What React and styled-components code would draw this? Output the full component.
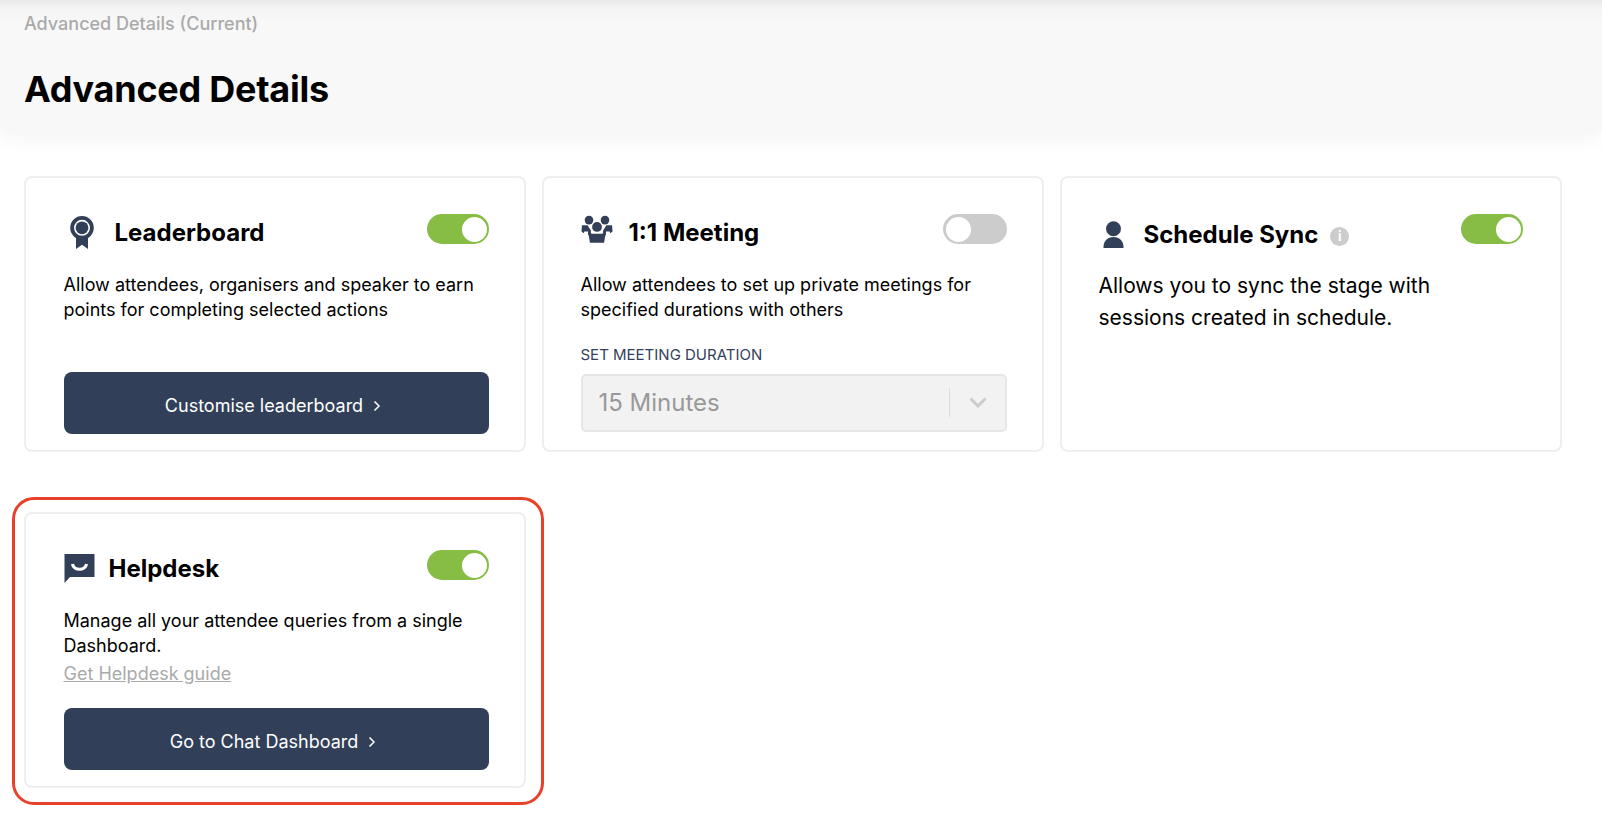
import React from "react";
import styled, { createGlobalStyle } from "styled-components";

const Global = createGlobalStyle`
  html, body { margin: 0; padding: 0; background: #fff; }
  body { font-family: Inter, "Noto Sans", sans-serif; color: #000; -webkit-font-smoothing: antialiased; }
  * { box-sizing: border-box; }
`;

const Page = styled.div`
  width: 1602px;
  height: 832px;
  overflow: hidden;
`;
const Header = styled.header`
  height: 130px;
  padding: 14px 24px 0;
  background: linear-gradient(#e9e9e9 0, #f4f4f4 9px, #f8f8f8 24px);
  box-shadow: 0 10px 18px rgba(0, 0, 0, 0.04);
`;
const Crumb = styled.div`
  font-size: 18px;
  line-height: 20px;
  font-weight: 500;
  color: #aaaaaa;
`;
const PageTitle = styled.h1`
  margin: 33px 0 0;
  font-size: 36px;
  line-height: 44px;
  font-weight: 650;
  letter-spacing: -0.25px;
  color: #000;
`;
const Grid = styled.main`
  display: grid;
  grid-template-columns: repeat(3, 501.5px);
  grid-auto-rows: 276px;
  column-gap: 16.5px;
  row-gap: 60px;
  padding: 46px 0 0 24px;
`;
const Card = styled.section`
  position: relative;
  display: flex;
  flex-direction: column;
  padding: 36px 37.5px 16px ${(p) => p.$left || 37.5}px;
  background: #fff;
  border: 2px solid #eeeeee;
  border-radius: 8px;
  ${(p) =>
    p.$highlight &&
    `&::after {
      content: "";
      position: absolute;
      left: -14px; right: -20.5px; top: -17px; bottom: -19px;
      border: 3.5px solid #e8412a;
      border-radius: 22px;
      pointer-events: none;
    }`}
`;
const CardHead = styled.div`
  display: flex;
  justify-content: space-between;
  align-items: flex-start;
  height: 30px;
`;
const TitleGroup = styled.div`
  display: flex;
  align-items: center;
  height: 34px;
  margin-top: ${(p) => p.$drop || 1.5}px;
`;
const IconBox = styled.span`
  display: flex;
  width: ${(p) => p.$w}px;
  height: 34px;
  padding-left: ${(p) => p.$inset || 0}px;
  padding-bottom: ${(p) => p.$lift || 0}px;
  align-items: center;
`;
const CardTitle = styled.h2`
  margin: 0;
  font-size: 24px;
  line-height: 30px;
  font-weight: 650;
  color: #000;
`;
const InfoDot = styled.span`
  display: flex;
  align-items: center;
  justify-content: center;
  width: 19px;
  height: 19px;
  margin: 3px 0 0 12px;
  border-radius: 50%;
  background: #cccccc;
  color: #fff;
  font-size: 13px;
  font-weight: 700;
`;
const Toggle = styled.span`
  position: relative;
  flex: none;
  width: ${(p) => p.$w || 62}px;
  height: 30px;
  margin-right: ${(p) => -(p.$over ?? 3)}px;
  border-radius: 15px;
  background: ${(p) => (p.$on ? "#87bc45" : "#cccccc")};
  &::after {
    content: "";
    position: absolute;
    top: 3px;
    ${(p) => (p.$on ? "right: 2.5px;" : "left: 3px;")}
    width: 25px;
    height: 25px;
    border-radius: 50%;
    background: #fff;
  }
`;
const Desc = styled.p`
  margin: ${(p) => (p.$large ? 25.5 : 27.5)}px 0 0;
  font-size: ${(p) => (p.$large ? 21 : 18)}px;
  line-height: ${(p) => (p.$large ? 32 : 25.6)}px;
  color: #000;
`;
const GuideLink = styled.a`
  display: block;
  font-size: 18px;
  line-height: 25px;
  margin-top: 2px;
  color: #aaaaaa;
  text-decoration: underline;
`;
const ActionButton = styled.button`
  display: flex;
  align-items: center;
  justify-content: center;
  gap: 10px;
  width: 425px;
  height: 62px;
  margin-top: auto;
  padding: 5px 6px 0 0;
  border: 0;
  border-radius: 8px;
  background: #323f58;
  color: #fff;
  font-family: inherit;
  font-size: 18px;
  cursor: pointer;
`;
const FieldLabel = styled.div`
  margin-top: 22px;
  font-size: 15px;
  line-height: 20px;
  color: #33415c;
`;
const SelectBox = styled.div`
  display: flex;
  align-items: center;
  height: 58px;
  margin: 9px -3px 0 0;
  padding: 0 0 0 16px;
  background: #f2f2f2;
  border: 2px solid #e6e6e6;
  border-radius: 5px;
`;
const SelectValue = styled.span`
  flex: 1;
  font-size: 24px;
  color: #999999;
`;
const SelectSep = styled.span`
  width: 1px;
  height: 29px;
  background: #dcdcdc;
`;
const SelectArrow = styled.span`
  display: flex;
  justify-content: center;
  width: 55px;
`;

const Medal = () => (
  <svg width="24" height="33" viewBox="0 0 24 33">
    <path d="M6 18 L6 33 L12 28.8 L18 33 L18 18 Z" fill="#323f58" />
    <circle cx="12" cy="11.8" r="9.9" fill="#fff" stroke="#323f58" strokeWidth="3.8" />
    <circle cx="12" cy="11.8" r="6.4" fill="#323f58" />
  </svg>
);
const People = () => (
  <svg width="32" height="29" viewBox="0 0 34 30">
    <g fill="#323f58">
      <circle cx="8.5" cy="5" r="4.6" />
      <circle cx="25.5" cy="5" r="4.6" />
      <path d="M1 10.5 L7 10.5 L10.5 16 L10.5 21 L7.5 21 L7.5 17 L3.5 17 L3 19 L0.5 17 Z" />
      <path d="M33 10.5 L27 10.5 L23.5 16 L23.5 21 L26.5 21 L26.5 17 L30.5 17 L31 19 L33.5 17 Z" />
      <circle cx="17" cy="12.3" r="5.2" />
      <path d="M7.7 18.2 L12 19.5 L22 19.5 L26.3 18.2 L24.5 29 L9.5 29 Z" />
    </g>
  </svg>
);
const Person = () => (
  <svg width="23" height="28" viewBox="0 0 24 29">
    <g fill="#323f58">
      <circle cx="12" cy="8" r="7.8" />
      <path d="M1.5 28 C1.5 20 6 16.5 12 16.5 C18 16.5 22.5 20 22.5 28 Z" />
    </g>
  </svg>
);
const Chat = () => (
  <svg width="31" height="31" viewBox="0 0 31 31">
    <path d="M0.5 1 L30.5 1 L30.5 24 L6 24 L0.5 30 Z" fill="#323f58" />
    <path d="M8.5 11 C9.5 18 21.5 18 22.5 11" fill="none" stroke="#fff" strokeWidth="3.2" />
  </svg>
);
const Chevron = () => (
  <svg width="8" height="12" viewBox="0 0 8 12">
    <path d="M1.5 1.5 L6 6 L1.5 10.5" fill="none" stroke="#fff" strokeWidth="1.5" />
  </svg>
);
const DownArrow = () => (
  <svg width="18" height="11" viewBox="0 0 18 11">
    <path d="M1.5 1.5 L9 9 L16.5 1.5" fill="none" stroke="#cccccc" strokeWidth="3" />
  </svg>
);

export default function App() {
  return (
    <Page>
      <Global />
      <Header>
        <Crumb>Advanced Details (Current)</Crumb>
        <PageTitle>Advanced Details</PageTitle>
      </Header>
      <Grid>
        <Card>
          <CardHead>
            <TitleGroup>
              <IconBox $w={51} $inset={6}><Medal /></IconBox>
              <CardTitle>Leaderboard</CardTitle>
            </TitleGroup>
            <Toggle $on />
          </CardHead>
          <Desc>Allow attendees, organisers and speaker to earn points for completing selected actions</Desc>
          <ActionButton>Customise leaderboard <Chevron /></ActionButton>
        </Card>
        <Card $left={36.5}>
          <CardHead>
            <TitleGroup>
              <IconBox $w={48} $lift={6}><People /></IconBox>
              <CardTitle>1:1 Meeting</CardTitle>
            </TitleGroup>
            <Toggle $w={64} />
          </CardHead>
          <Desc>Allow attendees to set up private meetings for specified durations with others</Desc>
          <FieldLabel>SET MEETING DURATION</FieldLabel>
          <SelectBox>
            <SelectValue>15 Minutes</SelectValue>
            <SelectSep />
            <SelectArrow><DownArrow /></SelectArrow>
          </SelectBox>
        </Card>
        <Card $left={36.5}>
          <CardHead>
            <TitleGroup $drop={3.5}>
              <IconBox $w={45} $inset={3}><Person /></IconBox>
              <CardTitle>Schedule Sync</CardTitle>
              <InfoDot>i</InfoDot>
            </TitleGroup>
            <Toggle $on $over={1} />
          </CardHead>
          <Desc $large>Allows you to sync the stage with<br />sessions created in schedule.</Desc>
        </Card>
        <Card $highlight>
          <CardHead>
            <TitleGroup>
              <IconBox $w={45}><Chat /></IconBox>
              <CardTitle>Helpdesk</CardTitle>
            </TitleGroup>
            <Toggle $on />
          </CardHead>
          <Desc>Manage all your attendee queries from a single Dashboard.</Desc>
          <GuideLink>Get Helpdesk guide</GuideLink>
          <ActionButton>Go to Chat Dashboard <Chevron /></ActionButton>
        </Card>
      </Grid>
    </Page>
  );
}
